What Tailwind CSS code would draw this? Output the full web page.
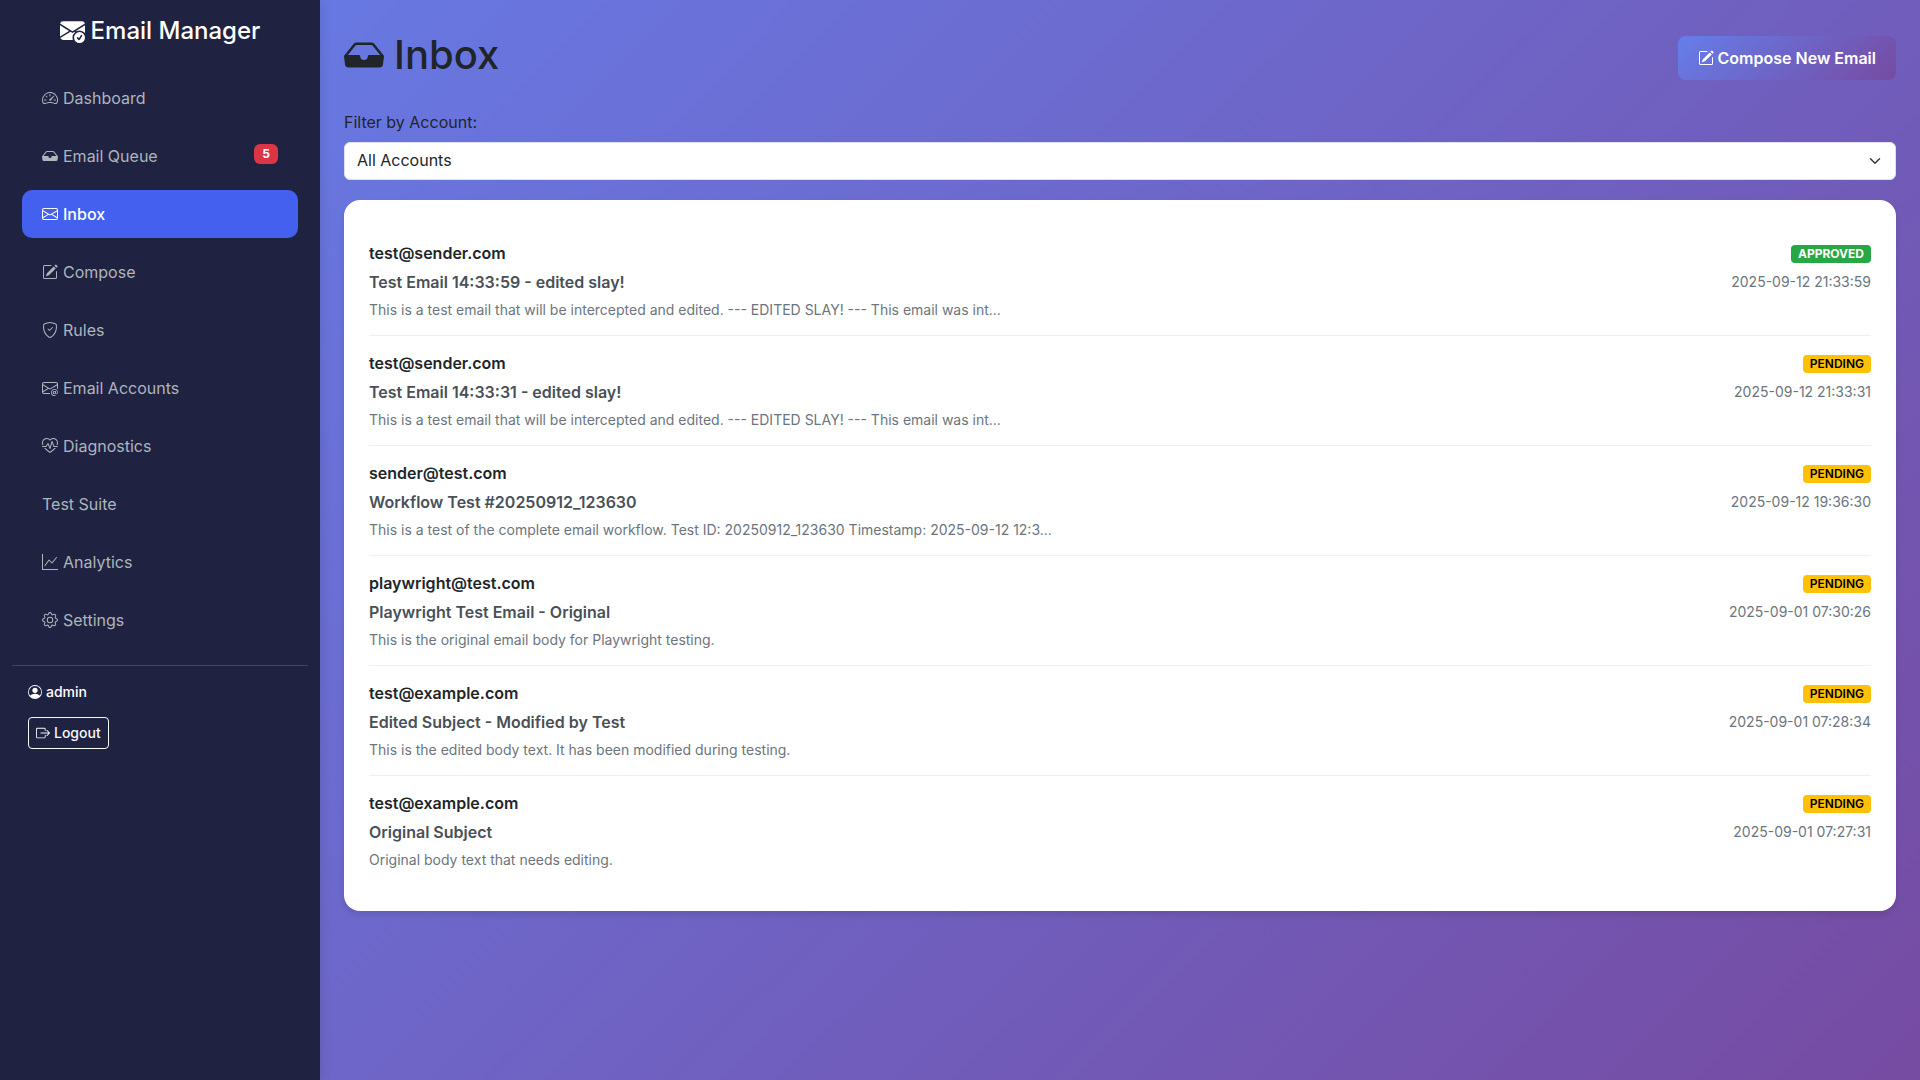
<!DOCTYPE html>
<html lang="en">
<head>
<meta charset="utf-8">
<meta name="viewport" content="width=device-width, initial-scale=1">
<title>Inbox - Email Manager</title>
<script src="https://cdn.jsdelivr.net/npm/@tailwindcss/browser@4"></script>
</head>
<body class="min-h-screen bg-linear-135 from-[#667eea] to-[#764ba2] [--tw-gradient-position:135deg] font-['Inter',sans-serif] text-base text-[#212529]">
<svg class="hidden" aria-hidden="true">
  <symbol id="envelope-check" viewBox="0 0 16 16"><path d="M.05 3.555A2 2 0 0 1 2 2h12a2 2 0 0 1 1.95 1.555L8 8.414zM0 4.697v7.104l5.803-3.558zM6.761 8.83l-6.57 4.026A2 2 0 0 0 2 14h6.256A4.5 4.5 0 0 1 8 12.5a4.49 4.49 0 0 1 1.606-3.446l-.367-.225L8 9.586zM16 4.697v4.974A4.5 4.5 0 0 0 12.5 8a4.5 4.5 0 0 0-1.965.45l-.338-.207z"/><path d="M16 12.5a3.5 3.5 0 1 1-7 0 3.5 3.5 0 0 1 7 0m-1.993-1.679a.5.5 0 0 0-.686.172l-1.17 1.95-.547-.547a.5.5 0 0 0-.708.708l.774.773a.75.75 0 0 0 1.174-.144l1.335-2.226a.5.5 0 0 0-.172-.686"/></symbol>
  <symbol id="speedometer" viewBox="0 0 16 16"><path d="M8 4a.5.5 0 0 1 .5.5V6a.5.5 0 0 1-1 0V4.5A.5.5 0 0 1 8 4M3.732 5.732a.5.5 0 0 1 .707 0l.915.914a.5.5 0 1 1-.708.708l-.914-.915a.5.5 0 0 1 0-.707M2 10a.5.5 0 0 1 .5-.5h1.586a.5.5 0 0 1 0 1H2.5A.5.5 0 0 1 2 10m9.5 0a.5.5 0 0 1 .5-.5h1.5a.5.5 0 0 1 0 1H12a.5.5 0 0 1-.5-.5m.754-4.246a.39.39 0 0 0-.527-.02L7.547 9.31a.91.91 0 1 0 1.302 1.258l3.434-4.297a.39.39 0 0 0-.029-.518z"/><path fill-rule="evenodd" d="M0 10a8 8 0 1 1 15.547 2.661c-.442 1.253-1.845 1.602-2.932 1.25C11.309 13.488 9.475 13 8 13c-1.474 0-3.31.488-4.615.911-1.087.352-2.49.003-2.932-1.25A8 8 0 0 1 0 10m8-7a7 7 0 0 0-6.603 9.329c.203.575.923.876 1.68.63C4.397 12.533 6.358 12 8 12s3.604.532 4.923.96c.757.245 1.477-.056 1.68-.631A7 7 0 0 0 8 3"/></symbol>
  <symbol id="tray" viewBox="0 0 16 16"><path d="M4.98 4a.5.5 0 0 0-.39.188L1.54 8H6a.5.5 0 0 1 .5.5 1.5 1.5 0 1 0 3 0A.5.5 0 0 1 10 8h4.46l-3.05-3.812A.5.5 0 0 0 11.02 4zm-1.17-.437A1.5 1.5 0 0 1 4.98 3h6.04a1.5 1.5 0 0 1 1.17.563l3.7 4.625a.5.5 0 0 1 .106.374l-.39 3.124A1.5 1.5 0 0 1 14.117 13H1.883a1.5 1.5 0 0 1-1.489-1.314l-.39-3.124a.5.5 0 0 1 .106-.374z"/></symbol>
  <symbol id="envelope" viewBox="0 0 16 16"><path d="M0 4a2 2 0 0 1 2-2h12a2 2 0 0 1 2 2v8a2 2 0 0 1-2 2H2a2 2 0 0 1-2-2zm2-1a1 1 0 0 0-1 1v.217l7 4.2 7-4.2V4a1 1 0 0 0-1-1zm13 2.383-4.708 2.825L15 11.105zm-.034 6.876-5.64-3.471L8 9.583l-1.326-.795-5.64 3.47A1 1 0 0 0 2 13h12a1 1 0 0 0 .966-.741M1 11.105l4.708-2.897L1 5.383z"/></symbol>
  <symbol id="pencil" viewBox="0 0 16 16"><path d="M15.502 1.94a.5.5 0 0 1 0 .706L14.459 3.69l-2-2L13.502.646a.5.5 0 0 1 .707 0l1.293 1.293zm-1.75 2.456-2-2L4.939 9.21a.5.5 0 0 0-.121.196l-.805 2.414a.25.25 0 0 0 .316.316l2.414-.805a.5.5 0 0 0 .196-.12l6.813-6.814z"/><path fill-rule="evenodd" d="M1 13.5A1.5 1.5 0 0 0 2.5 15h11a1.5 1.5 0 0 0 1.5-1.5v-6a.5.5 0 0 0-1 0v6a.5.5 0 0 1-.5.5h-11a.5.5 0 0 1-.5-.5v-11a.5.5 0 0 1 .5-.5H9a.5.5 0 0 0 0-1H2.5A1.5 1.5 0 0 0 1 2.5z"/></symbol>
  <symbol id="shield" viewBox="0 0 16 16"><path d="M5.338 1.59a61 61 0 0 0-2.837.856.48.48 0 0 0-.328.39c-.554 4.157.726 7.19 2.253 9.188a10.7 10.7 0 0 0 2.287 2.233c.346.244.652.42.893.533q.18.085.293.118a1 1 0 0 0 .101.025 1 1 0 0 0 .1-.025q.114-.034.294-.118c.24-.113.547-.29.893-.533a10.7 10.7 0 0 0 2.287-2.233c1.527-1.997 2.807-5.031 2.253-9.188a.48.48 0 0 0-.328-.39c-.651-.213-1.75-.56-2.837-.855C9.552 1.29 8.531 1.067 8 1.067c-.53 0-1.552.223-2.662.524zM5.072.56C6.157.265 7.31 0 8 0s1.843.265 2.928.56c1.11.3 2.229.655 2.887.87a1.54 1.54 0 0 1 1.044 1.262c.596 4.477-.787 7.795-2.465 9.99a11.8 11.8 0 0 1-2.517 2.453 7 7 0 0 1-1.048.625c-.28.132-.581.24-.829.24s-.548-.108-.829-.24a7 7 0 0 1-1.048-.625 11.8 11.8 0 0 1-2.517-2.453C1.928 10.487.545 7.169 1.141 2.692A1.54 1.54 0 0 1 2.185 1.43 63 63 0 0 1 5.072.56"/><path d="M10.854 5.146a.5.5 0 0 1 0 .708l-3 3a.5.5 0 0 1-.708 0l-1.5-1.5a.5.5 0 1 1 .708-.708L7.5 7.793l2.646-2.647a.5.5 0 0 1 .708 0"/></symbol>
  <symbol id="envelope-at" viewBox="0 0 16 16"><path d="M2 2a2 2 0 0 0-2 2v8.01A2 2 0 0 0 2 14h5.5a.5.5 0 0 0 0-1H2a1 1 0 0 1-.966-.741l5.64-3.471L8 9.583l7-4.2V8.5a.5.5 0 0 0 1 0V4a2 2 0 0 0-2-2zm3.708 6.208L1 11.105V5.383zM1 4.217V4a1 1 0 0 1 1-1h12a1 1 0 0 1 1 1v.217l-7 4.2z"/><path d="M14.247 14.269c1.01 0 1.587-.857 1.587-2.025v-.21C15.834 10.43 14.64 9 12.52 9h-.035C10.42 9 9 10.36 9 12.432v.214C9 14.82 10.438 16 12.358 16h.044c.594 0 1.018-.074 1.237-.175v-.73c-.245.11-.673.18-1.18.18h-.044c-1.334 0-2.571-.788-2.571-2.655v-.157c0-1.657 1.058-2.724 2.64-2.724h.04c1.535 0 2.484 1.05 2.484 2.326v.118c0 .975-.324 1.39-.639 1.39-.232 0-.41-.148-.41-.42v-2.19h-.906v.569h-.03c-.084-.298-.368-.63-.954-.63-.778 0-1.259.555-1.259 1.4v.528c0 .892.49 1.434 1.26 1.434.471 0 .896-.227 1.014-.643h.043c.118.42.617.648 1.12.648m-2.453-1.588v-.227c0-.546.227-.791.573-.791.297 0 .572.192.572.708v.367c0 .573-.253.744-.564.744-.354 0-.581-.215-.581-.8Z"/></symbol>
  <symbol id="heart" viewBox="0 0 16 16"><path d="m8 2.748-.717-.737C5.6.281 2.514.878 1.4 3.053.918 3.995.78 5.323 1.508 7H.43c-2.128-5.697 4.165-8.83 7.394-5.857q.09.083.176.171a3 3 0 0 1 .176-.17c3.23-2.974 9.522.159 7.394 5.856h-1.078c.728-1.677.59-3.005.108-3.947C13.486.878 10.4.28 8.717 2.01zM2.212 10h1.315C4.593 11.183 6.05 12.458 8 13.795c1.949-1.337 3.407-2.612 4.473-3.795h1.315c-1.265 1.566-3.14 3.25-5.788 5-2.648-1.75-4.523-3.434-5.788-5"/><path d="M10.464 3.314a.5.5 0 0 0-.945.049L7.921 8.956 6.464 5.314a.5.5 0 0 0-.88-.091L3.732 8H.5a.5.5 0 0 0 0 1H4a.5.5 0 0 0 .416-.223l1.473-2.209 1.647 4.118a.5.5 0 0 0 .945-.049l1.598-5.593 1.457 3.642A.5.5 0 0 0 12 9h3.5a.5.5 0 0 0 0-1h-3.162z"/></symbol>
  <symbol id="graph" viewBox="0 0 16 16"><path fill-rule="evenodd" d="M0 0h1v15h15v1H0zm14.817 3.113a.5.5 0 0 1 .07.704l-4.5 5.5a.5.5 0 0 1-.74.037L7.06 6.767l-3.656 5.027a.5.5 0 0 1-.808-.588l4-5.5a.5.5 0 0 1 .758-.06l2.609 2.61 4.15-5.073a.5.5 0 0 1 .704-.07"/></symbol>
  <symbol id="gear" viewBox="0 0 16 16"><path d="M8 4.754a3.246 3.246 0 1 0 0 6.492 3.246 3.246 0 0 0 0-6.492M5.754 8a2.246 2.246 0 1 1 4.492 0 2.246 2.246 0 0 1-4.492 0"/><path d="M9.796 1.343c-.527-1.79-3.065-1.79-3.592 0l-.094.319a.873.873 0 0 1-1.255.52l-.292-.16c-1.64-.892-3.433.902-2.54 2.541l.159.292a.873.873 0 0 1-.52 1.255l-.319.094c-1.79.527-1.79 3.065 0 3.592l.319.094a.873.873 0 0 1 .52 1.255l-.16.292c-.892 1.64.901 3.434 2.541 2.54l.292-.159a.873.873 0 0 1 1.255.52l.094.319c.527 1.79 3.065 1.79 3.592 0l.094-.319a.873.873 0 0 1 1.255-.52l.292.16c1.64.893 3.434-.902 2.54-2.541l-.159-.292a.873.873 0 0 1 .52-1.255l.319-.094c1.79-.527 1.79-3.065 0-3.592l-.319-.094a.873.873 0 0 1-.52-1.255l.16-.292c.893-1.64-.902-3.433-2.541-2.54l-.292.159a.873.873 0 0 1-1.255-.52zm-2.633.283c.246-.835 1.428-.835 1.674 0l.094.319a1.873 1.873 0 0 0 2.693 1.115l.291-.16c.764-.415 1.6.42 1.184 1.185l-.159.292a1.873 1.873 0 0 0 1.116 2.692l.318.094c.835.246.835 1.428 0 1.674l-.319.094a1.873 1.873 0 0 0-1.115 2.693l.16.291c.415.764-.42 1.6-1.185 1.184l-.291-.159a1.873 1.873 0 0 0-2.693 1.116l-.094.318c-.246.835-1.428.835-1.674 0l-.094-.319a1.873 1.873 0 0 0-2.692-1.115l-.292.16c-.764.415-1.6-.42-1.184-1.185l.159-.291A1.873 1.873 0 0 0 1.945 8.93l-.319-.094c-.835-.246-.835-1.428 0-1.674l.319-.094A1.873 1.873 0 0 0 3.06 4.377l-.16-.292c-.415-.764.42-1.6 1.185-1.184l.292.159a1.873 1.873 0 0 0 2.692-1.115z"/></symbol>
  <symbol id="person" viewBox="0 0 16 16"><path d="M11 6a3 3 0 1 1-6 0 3 3 0 0 1 6 0"/><path fill-rule="evenodd" d="M0 8a8 8 0 1 1 16 0A8 8 0 0 1 0 8m8-7a7 7 0 0 0-5.468 11.37C3.242 11.226 4.805 10 8 10s4.757 1.225 5.468 2.37A7 7 0 0 0 8 1"/></symbol>
  <symbol id="exit" viewBox="0 0 16 16"><path fill-rule="evenodd" d="M10 12.5a.5.5 0 0 1-.5.5h-8a.5.5 0 0 1-.5-.5v-9a.5.5 0 0 1 .5-.5h8a.5.5 0 0 1 .5.5v2a.5.5 0 0 0 1 0v-2A1.5 1.5 0 0 0 9.5 2h-8A1.5 1.5 0 0 0 0 3.5v9A1.5 1.5 0 0 0 1.5 14h8a1.5 1.5 0 0 0 1.5-1.5v-2a.5.5 0 0 0-1 0z"/><path fill-rule="evenodd" d="M15.854 8.354a.5.5 0 0 0 0-.708l-3-3a.5.5 0 0 0-.708.708L14.293 7.5H5.5a.5.5 0 0 0 0 1h8.793l-2.147 2.146a.5.5 0 0 0 .708.708z"/></symbol>
</svg>
<div class="flex min-h-screen">
  <aside class="flex w-1/6 shrink-0 flex-col bg-[#1f2241] px-3 shadow-[2px_0_10px_rgba(0,0,0,0.1)]">
    <div class="flex h-[61px] items-center justify-center gap-[6px] text-2xl font-medium text-white">
      <svg class="size-[25px] fill-current"><use href="#envelope-check"/></svg>
      <span>Email Manager</span>
    </div>
    <nav class="mt-[13px] flex flex-col gap-[10px] px-[10px] text-base text-[#adb5bd]">
      <a href="#" class="flex h-12 items-center gap-[5px] rounded-[10px] px-5"><svg class="size-4 fill-current"><use href="#speedometer"/></svg>Dashboard</a>
      <a href="#" class="flex h-12 items-center gap-[5px] rounded-[10px] px-5"><svg class="size-4 fill-current"><use href="#tray"/></svg>Email Queue<span class="mb-[5px] ml-auto flex h-5 items-center rounded-md bg-[#dc3545] px-2 text-xs font-bold text-white">5</span></a>
      <a href="#" aria-current="page" class="flex h-12 items-center gap-[5px] rounded-[10px] bg-[#4361ee] px-5 font-medium text-white"><svg class="size-4 fill-current"><use href="#envelope"/></svg>Inbox</a>
      <a href="#" class="flex h-12 items-center gap-[5px] rounded-[10px] px-5"><svg class="size-4 fill-current"><use href="#pencil"/></svg>Compose</a>
      <a href="#" class="flex h-12 items-center gap-[5px] rounded-[10px] px-5"><svg class="size-4 fill-current"><use href="#shield"/></svg>Rules</a>
      <a href="#" class="flex h-12 items-center gap-[5px] rounded-[10px] px-5"><svg class="size-4 fill-current"><use href="#envelope-at"/></svg>Email Accounts</a>
      <a href="#" class="flex h-12 items-center gap-[5px] rounded-[10px] px-5"><svg class="size-4 fill-current"><use href="#heart"/></svg>Diagnostics</a>
      <a href="#" class="flex h-12 items-center gap-[5px] rounded-[10px] px-5">Test Suite</a>
      <a href="#" class="flex h-12 items-center gap-[5px] rounded-[10px] px-5"><svg class="size-4 fill-current"><use href="#graph"/></svg>Analytics</a>
      <a href="#" class="flex h-12 items-center gap-[5px] rounded-[10px] px-5"><svg class="size-4 fill-current"><use href="#gear"/></svg>Settings</a>
    </nav>
    <div class="mt-[21px] flex flex-col items-start gap-[15px] border-t border-[#414360] px-4 pt-4 text-sm font-medium text-white">
      <div class="flex items-center gap-1"><svg class="size-[14px] fill-current"><use href="#person"/></svg>admin</div>
      <button type="button" class="flex h-8 items-center gap-1 rounded border border-[#f8f9fa] px-[7px] text-[#f8f9fa]"><svg class="size-[14px] fill-current"><use href="#exit"/></svg>Logout</button>
    </div>
  </aside>
  <main class="min-w-0 flex-1 px-6 pt-[30px] pb-6">
    <div class="flex items-center justify-between">
      <h1 class="flex items-center gap-[10px] text-[40px] leading-[48px] font-medium"><svg class="size-10 fill-current"><use href="#tray"/></svg>Inbox</h1>
      <button type="button" class="mt-[6px] flex h-11 items-center gap-1 rounded-lg bg-linear-135 from-[#667eea] to-[#764ba2] px-5 text-base font-semibold text-white [--tw-gradient-position:135deg]"><svg class="size-4 fill-current"><use href="#pencil"/></svg>Compose New Email</button>
    </div>
    <label for="account" class="mt-[30px] mb-2 block leading-6">Filter by Account:</label>
    <div class="relative">
      <select id="account" class="h-[38px] w-full appearance-none rounded-md border border-[#dee2e6] bg-white pr-9 pb-[2px] pl-3">
        <option>All Accounts</option>
      </select>
      <svg class="pointer-events-none absolute top-[13px] right-[13px] h-3 w-4 fill-none stroke-[#343a40] stroke-2" viewBox="0 0 16 16"><path stroke-linecap="round" stroke-linejoin="round" d="m2 5 6 6 6-6"/></svg>
    </div>
    <ul class="mt-5 rounded-2xl bg-white px-[25px] py-[26px] shadow-[0_4px_6px_rgba(0,0,0,0.1)] [&>li]:flex [&>li]:justify-between [&>li]:border-b [&>li]:border-[#f0f0f0] [&>li]:py-[15px] [&>li:last-child]:border-b-0">
      <li>
        <div class="flex flex-col gap-[5px]"><div class="leading-6 font-semibold">test@sender.com</div><div class="leading-6 font-semibold text-[#495057]">Test Email 14:33:59 - edited slay!</div><div class="text-sm leading-[21px] text-[#6c757d]">This is a test email that will be intercepted and edited. --- EDITED SLAY! --- This email was int...</div></div>
        <div class="flex flex-col items-end gap-[9px] pt-1"><span class="rounded bg-[#28a745] px-[7px] text-xs leading-[18px] font-bold text-white">APPROVED</span><time class="text-sm leading-5 text-[#6c757d]">2025-09-12 21:33:59</time></div>
      </li>
      <li>
        <div class="flex flex-col gap-[5px]"><div class="leading-6 font-semibold">test@sender.com</div><div class="leading-6 font-semibold text-[#495057]">Test Email 14:33:31 - edited slay!</div><div class="text-sm leading-[21px] text-[#6c757d]">This is a test email that will be intercepted and edited. --- EDITED SLAY! --- This email was int...</div></div>
        <div class="flex flex-col items-end gap-[9px] pt-1"><span class="rounded bg-[#ffc107] px-[7px] text-xs leading-[18px] font-semibold text-black">PENDING</span><time class="text-sm leading-5 text-[#6c757d]">2025-09-12 21:33:31</time></div>
      </li>
      <li>
        <div class="flex flex-col gap-[5px]"><div class="leading-6 font-semibold">sender@test.com</div><div class="leading-6 font-semibold text-[#495057]">Workflow Test #20250912_123630</div><div class="text-sm leading-[21px] text-[#6c757d]">This is a test of the complete email workflow. Test ID: 20250912_123630 Timestamp: 2025-09-12 12:3...</div></div>
        <div class="flex flex-col items-end gap-[9px] pt-1"><span class="rounded bg-[#ffc107] px-[7px] text-xs leading-[18px] font-semibold text-black">PENDING</span><time class="text-sm leading-5 text-[#6c757d]">2025-09-12 19:36:30</time></div>
      </li>
      <li>
        <div class="flex flex-col gap-[5px]"><div class="leading-6 font-semibold">playwright@test.com</div><div class="leading-6 font-semibold text-[#495057]">Playwright Test Email - Original</div><div class="text-sm leading-[21px] text-[#6c757d]">This is the original email body for Playwright testing.</div></div>
        <div class="flex flex-col items-end gap-[9px] pt-1"><span class="rounded bg-[#ffc107] px-[7px] text-xs leading-[18px] font-semibold text-black">PENDING</span><time class="text-sm leading-5 text-[#6c757d]">2025-09-01 07:30:26</time></div>
      </li>
      <li>
        <div class="flex flex-col gap-[5px]"><div class="leading-6 font-semibold">test@example.com</div><div class="leading-6 font-semibold text-[#495057]">Edited Subject - Modified by Test</div><div class="text-sm leading-[21px] text-[#6c757d]">This is the edited body text. It has been modified during testing.</div></div>
        <div class="flex flex-col items-end gap-[9px] pt-1"><span class="rounded bg-[#ffc107] px-[7px] text-xs leading-[18px] font-semibold text-black">PENDING</span><time class="text-sm leading-5 text-[#6c757d]">2025-09-01 07:28:34</time></div>
      </li>
      <li>
        <div class="flex flex-col gap-[5px]"><div class="leading-6 font-semibold">test@example.com</div><div class="leading-6 font-semibold text-[#495057]">Original Subject</div><div class="text-sm leading-[21px] text-[#6c757d]">Original body text that needs editing.</div></div>
        <div class="flex flex-col items-end gap-[9px] pt-1"><span class="rounded bg-[#ffc107] px-[7px] text-xs leading-[18px] font-semibold text-black">PENDING</span><time class="text-sm leading-5 text-[#6c757d]">2025-09-01 07:27:31</time></div>
      </li>
    </ul>
  </main>
</div>
</body>
</html>
